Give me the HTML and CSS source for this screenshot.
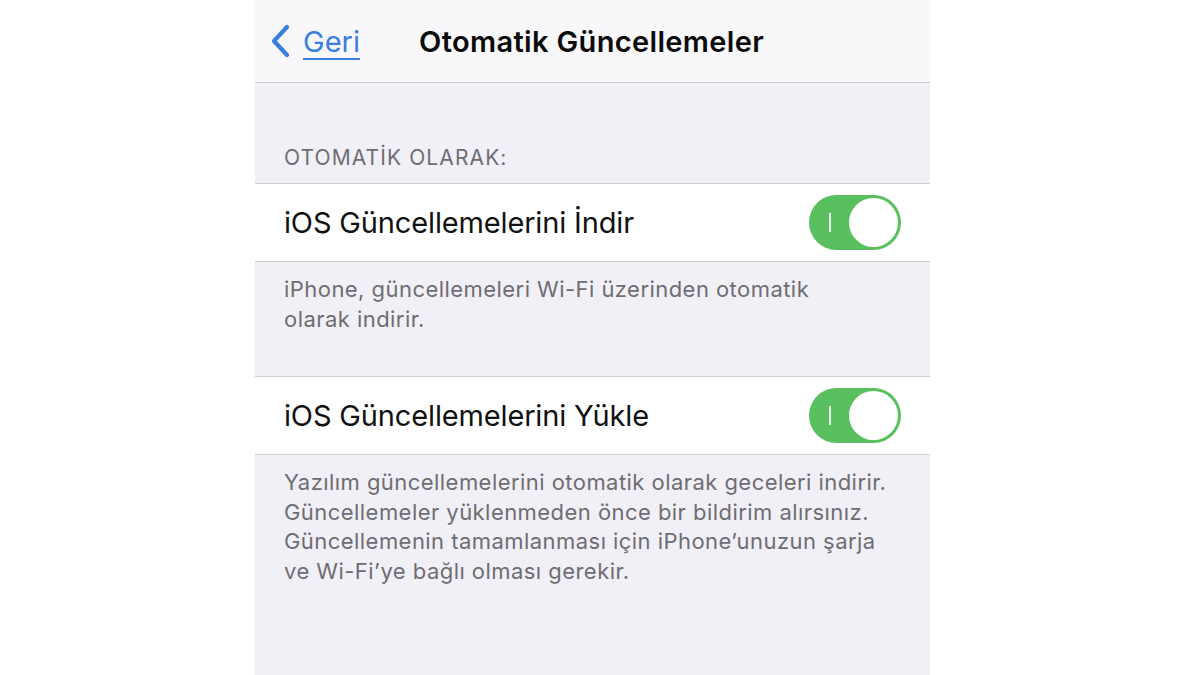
FILE: index.html
```html
<!DOCTYPE html>
<html>
<head>
  <title>Otomatik Güncellemeler</title>
  <meta charset="utf-8">
  <link rel="stylesheet" href="styles.css">
</head>
<body>

  <div class="screen">
    <div class="nav-bar">
      <a class="back" href="#">
        <svg class="chevron" width="22" height="34" viewBox="0 0 22 34">
          <path d="M18 3 L5 17 L18 31" fill="none" stroke="#3a7de0" stroke-width="4.2" stroke-linecap="round" stroke-linejoin="round"/>
        </svg>
        <span class="back-label">Geri</span>
      </a>
      <div class="nav-title">Otomatik Güncellemeler</div>
    </div>

    <div class="group-header">OTOMATİK OLARAK:</div>
    <div class="cell">
      <span class="cell-label">iOS Güncellemelerini İndir</span>
      <div class="switch on"><span class="switch-mark"></span><span class="switch-knob"></span></div>
    </div>
    <div class="group-footer">
      iPhone, güncellemeleri Wi-Fi üzerinden otomatik<br>olarak indirir.
    </div>

    <div class="cell">
      <span class="cell-label">iOS Güncellemelerini Yükle</span>
      <div class="switch on"><span class="switch-mark"></span><span class="switch-knob"></span></div>
    </div>
    <div class="group-footer last">
      Yazılım güncellemelerini otomatik olarak geceleri indirir.<br>
      Güncellemeler yüklenmeden önce bir bildirim alırsınız.<br>
      Güncellemenin tamamlanması için iPhone’unuzun şarja<br>
      ve Wi-Fi’ye bağlı olması gerekir.
    </div>
  </div>

</body>
</html>
```

FILE: styles.css
```css
body {
  margin: 0;
  padding: 0 0 0 255px;
  background: #fff;
  font-family: Inter, "Noto Sans", sans-serif;
}
.screen {
  width: 675px;
  height: 675px;
  overflow: hidden;
  background: #f1f0f6;
}
.nav-bar {
  height: 82px;
  background: #f8f8fa;
  border-bottom: 1px solid #c9c9cc;
  display: flex;
  align-items: center;
  position: relative;
}
.back {
  display: flex;
  align-items: center;
  gap: 12px;
  margin-left: 14px;
  color: #3a7de0;
  text-decoration: none;
}
.chevron {
  display: block;
}
.back-label {
  font-size: 29px;
  text-decoration: underline;
  text-decoration-thickness: 2px;
  text-underline-offset: 6px;
}
.nav-title {
  position: absolute;
  left: 164px;
  top: 0;
  line-height: 84px;
  font-size: 29px;
  font-weight: 600;
  color: #0b0b0b;
  letter-spacing: 0.35px;
}
.group-header {
  padding: 62px 0 0 29px;
  height: 38px;
  font-size: 21px;
  color: #6e6d73;
  letter-spacing: 1.1px;
}
.cell {
  height: 77px;
  background: #fff;
  border-top: 1px solid #cfced3;
  border-bottom: 1px solid #cfced3;
  display: flex;
  align-items: center;
  justify-content: space-between;
  padding: 0 29px;
}
.cell-label {
  font-size: 29px;
  color: #111;
  letter-spacing: -0.15px;
}
.switch {
  width: 92px;
  height: 55px;
  border-radius: 28px;
  background: #e5e5ea;
  position: relative;
}
.switch.on {
  background: #5ac05f;
}
.switch-mark {
  position: absolute;
  left: 20px;
  top: 18px;
  width: 2px;
  height: 19px;
  background: #e8f8e8;
}
.switch-knob {
  position: absolute;
  right: 3px;
  top: 3px;
  width: 49px;
  height: 49px;
  border-radius: 50%;
  background: #fff;
}
.group-footer {
  padding: 13px 29px 0;
  height: 101px;
  font-size: 22px;
  line-height: 29.5px;
  color: #6e6d73;
  letter-spacing: 0.45px;
}
.group-footer.last {
  height: auto;
}
```
